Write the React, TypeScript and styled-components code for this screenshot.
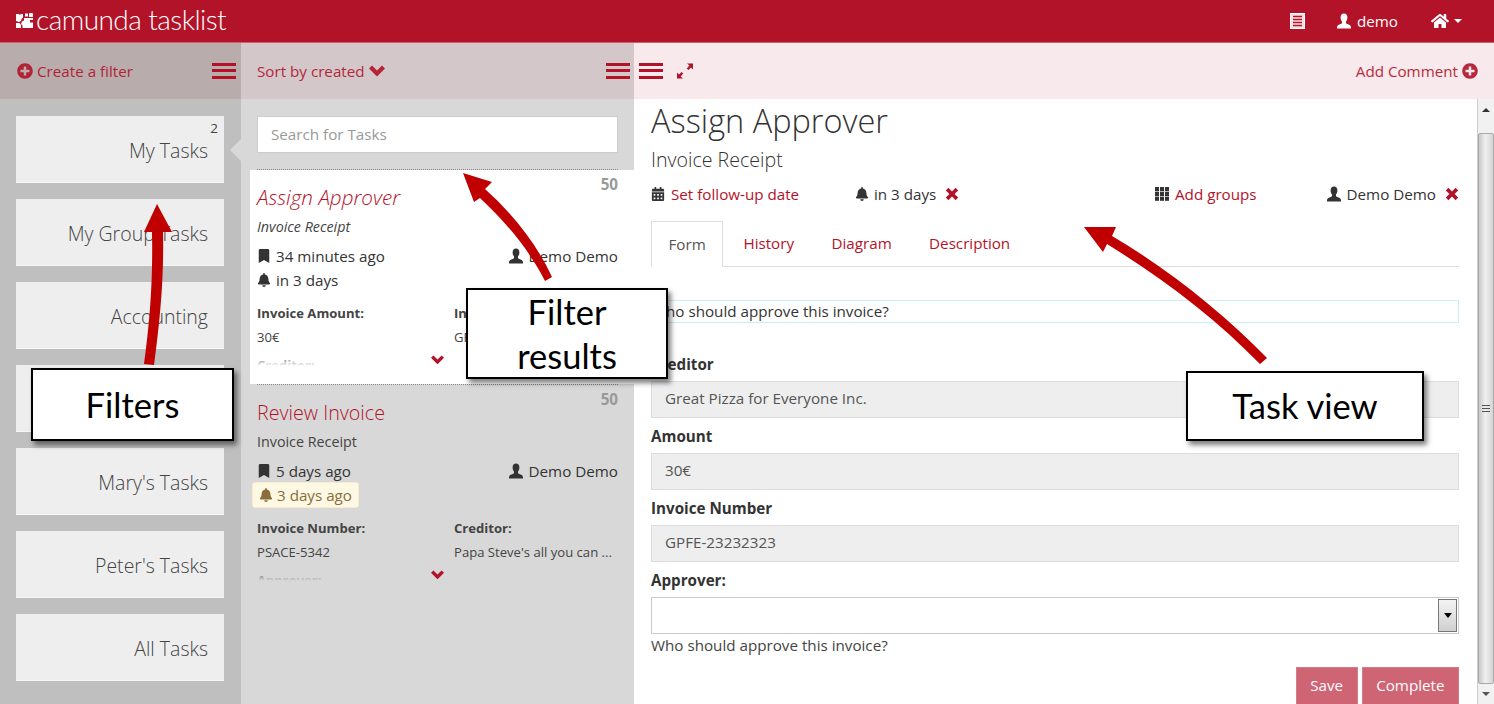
import React from "react";
import styled, { createGlobalStyle } from "styled-components";
import { FaPlusCircle, FaHome, FaBell, FaBookmark, FaCalendarAlt } from "react-icons/fa";

const Global = createGlobalStyle`
  html, body { margin: 0; padding: 0; background: #fff; overflow: hidden; }
  * { box-sizing: border-box; }
  body { font-family: "Open Sans", "Liberation Sans", sans-serif; color: #444; font-size: 15.2px; }
`;
const RED = "#b21329";

const Page = styled.div`
  position: relative; width: 1494px; height: 704px; overflow: hidden;
  display: flex; flex-direction: column;
`;
const Navbar = styled.header`
  height: 43px; flex: none; background: ${RED}; border-bottom: 1px solid #cf6072;
  display: flex; align-items: center; justify-content: space-between; padding: 0 32px 1px 16px; color: #fff;
`;
const Brand = styled.div`display: flex; align-items: center; gap: 3px; margin-top: 0;`;
const BrandText = styled.span`
  font-family: "Lato", sans-serif; font-weight: 300; font-size: 28px; line-height: 32px; white-space: pre; letter-spacing: -0.55px; margin-top: -4px;
`;
const NavItems = styled.nav`display: flex; align-items: center; font-size: 15.2px;`;
const NavUser = styled.span`display: flex; align-items: center; gap: 5px; margin: 0 33px 0 31px;`;
const Caret = styled.i`
  display: inline-block; width: 0; height: 0; margin-left: 5px;
  border-left: 4px solid transparent; border-right: 4px solid transparent; border-top: 4px solid #fff;
`;
const Columns = styled.div`flex: 1; min-height: 0; display: grid; grid-template-columns: 241px 393px 1fr;`;
const Column = styled.section<{ $bg: string }>`
  background: ${p => p.$bg}; display: flex; flex-direction: column; min-height: 0; overflow: hidden; position: relative;
`;
const Toolbar = styled.div<{ $bg: string; $pad?: string }>`
  height: 56px; flex: none; background: ${p => p.$bg}; display: flex; align-items: center; justify-content: space-between;
  padding: ${p => p.$pad || "0 5px 0 17px"}; color: ${RED}; font-size: 15.2px;
`;
const ToolLink = styled.span`display: inline-flex; align-items: center; gap: 4px; opacity: .9;`;
const ToolGroup = styled.span`display: inline-flex; align-items: center; gap: 13px;`;
const Burger = styled.span`
  display: inline-block; width: 24px; height: 16px;
  background: linear-gradient(${RED} 0 3px, transparent 3px 6.5px, ${RED} 6.5px 9.5px, transparent 9.5px 13px, ${RED} 13px 16px);
`;
const FilterList = styled.div`display: flex; flex-direction: column; gap: 16px; padding: 17px 17px 0 16px;`;
const FilterItem = styled.div`
  height: 67px; background: #eee; position: relative; display: flex; align-items: center; justify-content: flex-end;
  padding: 3px 16px 0 0; font-size: 19.5px; font-weight: 300; color: #444; border-bottom: 1px solid #f6f6f6;
`;
const Count = styled.span`position: absolute; top: 5px; right: 6px; font-size: 13.5px; font-weight: 400; line-height: 15px;`;
const Pointer = styled.i`
  position: absolute; right: -17px; top: 23px; width: 0; height: 0;
  border: 11px solid transparent; border-right-color: #d8d8d8; border-left: none;
`;
const SearchWrap = styled.div`padding: 17px 16px 16px; height: 70px; flex: none;`;
const Search = styled.div`
  height: 37px; background: #fff; border: 1px solid #ccc; padding: 0 13px; line-height: 35px; color: #999; font-size: 15.2px;
`;
const Separator = styled.i`display: block; flex: none; height: 1px; margin: 0 16px 0 16px; border-top: 1px dotted #888;`;
const Card = styled.article<{ $active?: boolean }>`
  flex: none; position: relative; margin-left: 9px; height: 214px; padding: 0 16px 0 7px;
  background: ${p => (p.$active ? "#fff" : "transparent")};
  overflow: hidden;
`;
const CardScore = styled.span`position: absolute; right: 16px; top: 4px; font-weight: 700; font-size: 15.2px; line-height: 20px; color: #999;`;
const CardTitle = styled.div<{ $active?: boolean }>`
  color: #b21329; font-size: ${p => (p.$active ? "20.7px" : "19.7px")}; font-weight: 300; line-height: 27px; padding-top: 14px; height: 41px;
  font-style: ${p => (p.$active ? "italic" : "normal")};
`;
const CardProc = styled.div<{ $active?: boolean }>`
  font-size: 14.3px; line-height: 18px; height: 33px; padding-top: 7px; color: #444; white-space: nowrap;
  font-style: ${p => (p.$active ? "italic" : "normal")};
`;
const MetaRow = styled.div`display: flex; justify-content: space-between; align-items: center; height: 24px; font-size: 15.2px; color: #333;`;
const Meta = styled.span`display: inline-flex; align-items: center; gap: 5px;`;
const Overdue = styled.span`
  display: inline-flex; align-items: center; gap: 4px; height: 26px; margin: 0 0 0 -5px; padding: 0 6px;
  background: #fcf8e3; border: 1px solid #faebcc; border-radius: 3px; color: #8a6d3b;
`;
const Vars = styled.div`
  display: grid; grid-template-columns: 197px 1fr; row-gap: 6px; margin-top: 12px; font-size: 13.1px; line-height: 18px;
`;
const VarLabel = styled.b<{ $next?: boolean }>`font-weight: 700; color: #444; display: block; white-space: nowrap; margin-top: ${p => (p.$next ? "4px" : "0")};`;
const VarValue = styled.span`color: #444; display: block; white-space: nowrap; overflow: hidden;`;
const FadeOut = styled.i<{ $c: string; $top: number }>`
  position: absolute; left: 0; right: 0; top: ${p => p.$top}px; bottom: 0;
  background: linear-gradient(${p => p.$c}00, ${p => p.$c} 12px);
`;
const More = styled.span<{ $top: number }>`
  position: absolute; left: 181px; top: ${p => p.$top}px; display: block; line-height: 0;
`;
const Right = styled.section`display: flex; flex-direction: column; min-height: 0; min-width: 0;`;
const Body = styled.div`flex: 1; min-height: 0; display: flex; background: #fff;`;
const Content = styled.div`flex: 1; min-width: 0; padding: 0 18px 0 17px; overflow: hidden;`;
const Title = styled.h1`margin: 0; font-size: 32.5px; font-weight: 300; line-height: 43px; color: #333;`;
const Sub = styled.h2`margin: 0; font-size: 19.6px; font-weight: 300; line-height: 24px; padding-top: 6px; color: #333;`;
const Actions = styled.div`display: grid; grid-template-columns: 204px 300px 1fr auto; align-items: center; height: 24px; margin-top: 10px; font-size: 15.2px;`;
const Act = styled.span<{ $red?: boolean }>`display: inline-flex; align-items: center; gap: ${p => (p.$red ? "6px" : "5px")}; color: ${p => (p.$red ? RED : "#333")};`;
const RemoveGap = styled.span`display: inline-flex; margin-left: 4px;`;
const Tabs = styled.div`display: flex; height: 46px; margin-top: 15px; border-bottom: 1px solid #ddd; font-size: 15.2px;`;
const Tab = styled.span<{ $active?: boolean }>`
  display: block; height: 46px; line-height: 45px; padding: 0 ${p => (p.$active ? "16.5px" : "18.7px")}; margin-right: ${p => (p.$active ? "1.5px" : "0")};
  color: ${p => (p.$active ? "#555" : RED)};
  ${p => p.$active && "border: 1px solid #ddd; border-bottom-color: #fff; background: #fff;"}
`;
const FormTop = styled.div`
  height: 23px; margin-top: 33px; border: 1px solid #c9eef5; font-size: 15.2px; line-height: 21px; color: #333; margin-bottom: 31px; white-space: nowrap;
`;
const Label = styled.div`font-weight: 700; font-size: 15.2px; line-height: 20px; color: #333; margin-bottom: 7px;`;
const Input = styled.div`
  height: 37px; background: #eee; border: 1px solid #ddd; padding: 0 13px; line-height: 33px; font-size: 15.2px; color: #555; margin-bottom: 8px;
`;
const Select = styled.div`
  height: 37px; background: #fff; border: 1px solid #ccc; display: flex; justify-content: flex-end; padding: 1px;
`;
const SelectBtn = styled.span`
  width: 19px; background: linear-gradient(#f4f4f4, #cfcfcf); border: 1px solid #777; display: flex; align-items: center; justify-content: center;
`;
const ArrowDown = styled.i`width: 0; height: 0; border: 4px solid transparent; border-top: 5px solid #000; border-bottom: none;`;
const Help = styled.div`font-size: 15.2px; line-height: 20px; color: #444; margin-top: 1px;`;
const Buttons = styled.div`display: flex; justify-content: flex-end; gap: 4px; margin-top: 12px;`;
const Btn = styled.span`
  height: 38px; padding: 0 13.5px; background: #cf6474; color: #fff; line-height: 34px; font-size: 15.2px; border: 1px solid #d67a88;
`;
const Scroll = styled.div`
  width: 17px; flex: none; background: #f1f1f1; border-left: 1px solid #ccc; display: flex; flex-direction: column; align-items: center; position: relative;
`;
const ScrollEnd = styled.span`height: 34px; flex: none; display: flex; justify-content: center; padding-top: 9px; width: 100%;`;
const ScrollEndBottom = styled.span`height: 20px; flex: none; display: flex; justify-content: center; align-items: center; width: 100%;`;
const ScrollUp = styled.i`width: 0; height: 0; border: 4px solid transparent; border-bottom: 4px solid #333; border-top: none;`;
const ScrollDown = styled.i`width: 0; height: 0; border: 4px solid transparent; border-top: 4px solid #555; border-bottom: none;`;
const Thumb = styled.span`
  flex: 1; width: 100%; background: linear-gradient(90deg, #c8c8c8, #f0f0f0 45%, #d4d4d4); border: 1px solid #aaa; border-radius: 2px;
  display: flex; align-items: center; justify-content: center;
`;
const Grip = styled.i`
  width: 8px; height: 7px; background: repeating-linear-gradient(#555 0 1px, transparent 1px 3px);
`;
const Callout = styled.div<{ $x: number; $y: number; $w: number; $h: number }>`
  position: absolute; left: ${p => p.$x}px; top: ${p => p.$y}px; width: ${p => p.$w}px; height: ${p => p.$h}px;
  background: #fff; border: 2px solid #000; box-shadow: 3px 4px 5px rgba(0,0,0,.5);
  display: flex; align-items: center; justify-content: center; text-align: center;
  font-family: "Lato", sans-serif; font-size: 34.5px; line-height: 44px; color: #000; z-index: 3;
`;
const ArrowLayer = styled.svg`position: absolute; inset: 0; z-index: 2; pointer-events: none;`;

const UserIcon = ({ s = 16, c = "currentColor" }: { s?: number; c?: string }) => (
  <svg width={s} height={s} viewBox="0 0 16 16" fill={c}>
    <path d="M8 0.5c2.1 0 3.4 1.5 3.4 3.9 0 1.6-.6 3-1.4 4v1.3c0 .6 .5 .9 1.3 1.2 1.6.6 3.7 1.2 3.7 3.1v1.5H1v-1.5c0-1.9 2.1-2.5 3.7-3.1.8-.3 1.3-.6 1.3-1.2V8.4c-.8-1-1.4-2.4-1.4-4C4.6 2 5.9.5 8 .5z" />
  </svg>
);
const Chevron = ({ w }: { w: number }) => (
  <svg width={w} height={w * 0.72} viewBox="0 0 16 11.5" fill={RED}>
    <path d="M8 11.5L0 3.5 3 .5l5 5 5-5 3 3z" />
  </svg>
);
const Remove = () => (
  <svg width="14" height="14" viewBox="0 0 14 14" fill={RED}>
    <path d="M3.4.8L7 4.4 10.6.8l2.6 2.6L9.6 7l3.6 3.6-2.6 2.6L7 9.6l-3.6 3.6-2.6-2.6L4.4 7 .8 3.4z" />
  </svg>
);
const ExpandIcon = () => (
  <svg width="18" height="18" viewBox="0 0 18 18" fill={RED}>
    <path d="M11 1.5h6v6l-2-2-2.6 2.6-1.6-1.6L13.4 3.6zM7 16.5H1v-6l2 2 2.6-2.6 1.6 1.6L4.6 14.4z" />
  </svg>
);
const GroupsIcon = () => (
  <svg width="14" height="14" viewBox="0 0 14 14" fill="#333">
    {[0, 5, 10].map(x => [0, 4.8, 9.6].map(y => <rect key={`${x}-${y}`} x={x} y={y} width="4" height="4.2" />))}
  </svg>
);
const ListIcon = () => (
  <svg width="15" height="16" viewBox="0 0 15 16">
    <rect x=".5" y=".5" width="14" height="15" fill="#f3dfe2" stroke="#fff" />
    <path d="M3 3.5h9M3 6.5h9M3 9.5h9M3 12.5h9" stroke={RED} strokeWidth="1.5" />
  </svg>
);
const Logo = () => (
  <svg width="17" height="15" viewBox="0 0 17 15" fill="#fff">
    <path d="M0 1h3l1 1 1-1h2v3.5L5.5 6 5 8 3 9 0 8zM9 .5h3v3H9zM13 1.5a2 2 0 1 1 4 0v2.5h-4zM8 5h9v2h-3v2.5h3V15H6.5v-2.5L5 11l1-2.5 2-1zM0 10h3.5L5 12v3H0z" />
  </svg>
);

const filters = ["My Tasks", "My Group Tasks", "Accounting", "John's Tasks", "Mary's Tasks", "Peter's Tasks", "All Tasks"];
const bell = <FaBell size={14} />;
const bookmark = <FaBookmark size={14} />;

export default function App() {
  return (
    <Page>
      <Global />
      <Navbar>
        <Brand>
          <Logo />
          <BrandText>camunda tasklist</BrandText>
        </Brand>
        <NavItems>
          <ListIcon />
          <NavUser><UserIcon s={16} />demo</NavUser>
          <FaHome size={18} />
          <Caret />
        </NavItems>
      </Navbar>
      <Columns>
        <Column $bg="#bfbfbf">
          <Toolbar $bg="#b9acad">
            <ToolLink><FaPlusCircle size={16} />Create a filter</ToolLink>
            <Burger />
          </Toolbar>
          <FilterList>
            {filters.map((f, i) => (
              <FilterItem key={f}>
                {f}
                {i === 0 && <Count>2</Count>}
                {i === 0 && <Pointer />}
              </FilterItem>
            ))}
          </FilterList>
        </Column>
        <Column $bg="#d8d8d8">
          <Toolbar $bg="#d3c7ca" $pad="0 4px 0 16px">
            <ToolLink>Sort by created<Chevron w={16} /></ToolLink>
            <Burger />
          </Toolbar>
          <SearchWrap><Search>Search for Tasks</Search></SearchWrap>
          <Separator />
          <Card $active>
            <CardScore>50</CardScore>
            <CardTitle $active>Assign Approver</CardTitle>
            <CardProc $active>Invoice Receipt</CardProc>
            <MetaRow><Meta>{bookmark}34 minutes ago</Meta><Meta><UserIcon s={16} />Demo Demo</Meta></MetaRow>
            <MetaRow><Meta>{bell}in 3 days</Meta></MetaRow>
            <Vars>
              <VarLabel>Invoice Amount:</VarLabel>
              <VarLabel>Invoice Number:</VarLabel>
              <VarValue>30€</VarValue>
              <VarValue>GPFE-23232323</VarValue>
              <VarLabel $next>Creditor:</VarLabel>
            </Vars>
            <FadeOut $c="#ffffff" $top={184} />
            <More $top={185}><Chevron w={13} /></More>
          </Card>
          <Separator />
          <Card>
            <CardScore>50</CardScore>
            <CardTitle>Review Invoice</CardTitle>
            <CardProc>Invoice Receipt</CardProc>
            <MetaRow><Meta>{bookmark}5 days ago</Meta><Meta><UserIcon s={16} />Demo Demo</Meta></MetaRow>
            <MetaRow><Overdue>{bell}3 days ago</Overdue></MetaRow>
            <Vars>
              <VarLabel>Invoice Number:</VarLabel>
              <VarLabel>Creditor:</VarLabel>
              <VarValue>PSACE-5342</VarValue>
              <VarValue>Papa Steve's all you can ...</VarValue>
              <VarLabel $next>Approver:</VarLabel>
            </Vars>
            <FadeOut $c="#d8d8d8" $top={184} />
            <More $top={185}><Chevron w={13} /></More>
          </Card>
        </Column>
        <Right>
          <Toolbar $bg="#f7e9ec" $pad="0 16px 0 5px">
            <ToolGroup><Burger /><ExpandIcon /></ToolGroup>
            <ToolLink>Add Comment<FaPlusCircle size={16} /></ToolLink>
          </Toolbar>
          <Body>
            <Content>
              <Title>Assign Approver</Title>
              <Sub>Invoice Receipt</Sub>
              <Actions>
                <Act $red><FaCalendarAlt size={14} color="#333" />Set follow-up date</Act>
                <Act>{bell}in 3 days<RemoveGap><Remove /></RemoveGap></Act>
                <Act $red><GroupsIcon />Add groups</Act>
                <Act><UserIcon s={16} />Demo Demo<RemoveGap><Remove /></RemoveGap></Act>
              </Actions>
              <Tabs>
                <Tab $active>Form</Tab>
                <Tab>History</Tab>
                <Tab>Diagram</Tab>
                <Tab>Description</Tab>
              </Tabs>
              <FormTop>Who should approve this invoice?</FormTop>
              <Label>Creditor</Label>
              <Input>Great Pizza for Everyone Inc.</Input>
              <Label>Amount</Label>
              <Input>30€</Input>
              <Label>Invoice Number</Label>
              <Input>GPFE-23232323</Input>
              <Label>Approver:</Label>
              <Select><SelectBtn><ArrowDown /></SelectBtn></Select>
              <Help>Who should approve this invoice?</Help>
              <Buttons><Btn>Save</Btn><Btn>Complete</Btn></Buttons>
            </Content>
            <Scroll>
              <ScrollEnd><ScrollUp /></ScrollEnd>
              <Thumb><Grip /></Thumb>
              <ScrollEndBottom><ScrollDown /></ScrollEndBottom>
            </Scroll>
          </Body>
        </Right>
      </Columns>
      <ArrowLayer width="1494" height="704" viewBox="0 0 1494 704">
        <path fill="#c00000" d="M144 364C150 320 153 280 152 232L144 232L157 204L172 232L163 232C164 280 160 320 154 365Z" />
        <path fill="#c00000" d="M545 281C530 252 510 226 480 198L474 202L463 173L492 182L485 189C515 216 537 245 552 277Z" />
        <path fill="#c00000" d="M1260 364C1215 318 1165 280 1107 244L1103 252L1084 227L1116 227L1112 236C1170 270 1225 315 1267 358Z" />
      </ArrowLayer>
      <Callout $x={31} $y={368} $w={203} $h={73}>Filters</Callout>
      <Callout $x={466} $y={288} $w={202} $h={91}>Filter<br />results</Callout>
      <Callout $x={1186} $y={371} $w={238} $h={70}>Task view</Callout>
    </Page>
  );
}
